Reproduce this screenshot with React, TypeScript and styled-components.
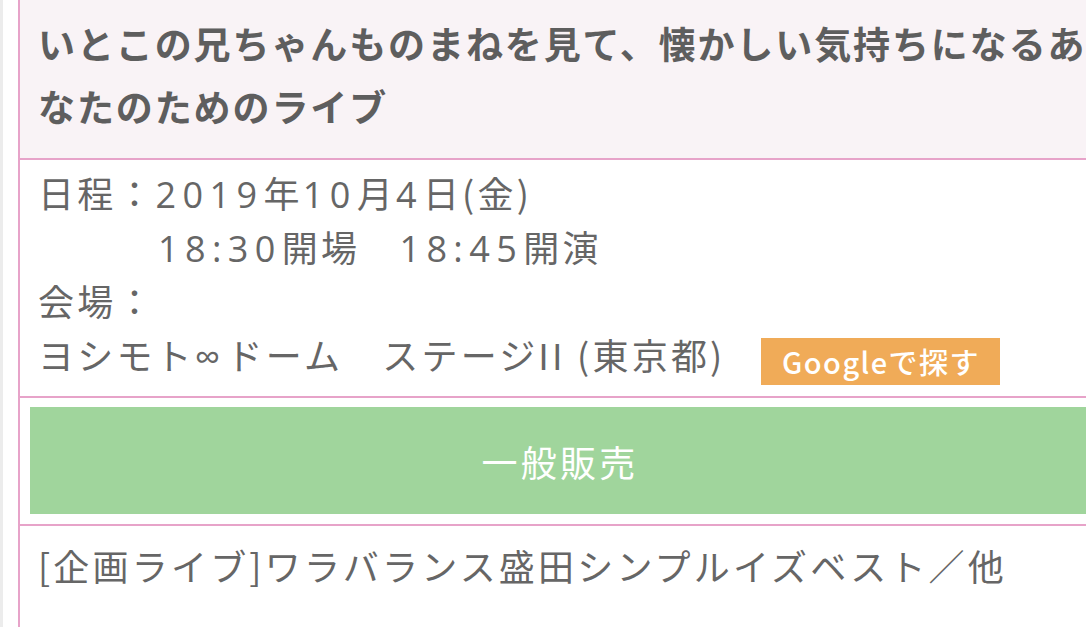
import React from "react";
import styled, { createGlobalStyle } from "styled-components";

const GlobalStyle = createGlobalStyle`
  html, body {
    margin: 0;
    padding: 0;
    background: #ffffff;
    overflow: hidden;
  }
  body {
    font-family: "Noto Sans CJK JP", "Noto Sans", sans-serif;
  }
`;

const PINK = "#e7a3c9";

const Page = styled.div`
  box-sizing: border-box;
  width: 1086px;
  height: 627px;
  overflow: hidden;
  background: #ffffff;
  border-left: 3px solid #ececec;
  padding-left: 15px;
`;

const Card = styled.section`
  width: 1080px;
  min-height: 627px;
  border-left: 2px solid ${PINK};
  border-right: 2px solid ${PINK};
  color: #666666;
  font-family: "Noto Sans CJK JP", sans-serif;
`;

const Title = styled.h2`
  margin: 0;
  padding: 12px 2px 20px 18px;
  background: #f9f3f6;
  border-bottom: 2px solid ${PINK};
  font-size: 37px;
  font-weight: 700;
  letter-spacing: 1.9px;
  line-height: 63px;
  color: #5e5e5e;
`;

const Info = styled.div`
  padding: 5px 10px 15px 18px;
  border-bottom: 2px solid ${PINK};
  font-size: 36px;
  font-weight: 400;
  letter-spacing: 3.2px;
  line-height: 54px;
`;

const InfoLine = styled.div<{ $indent?: number }>`
  display: flex;
  align-items: stretch;
  height: 54px;
  padding-left: ${(p) => p.$indent ?? 0}px;
  white-space: nowrap;
`;

const Num = styled.span`
  font-family: "Open Sans", "Noto Sans CJK JP", sans-serif;
  letter-spacing: 6.4px;
`;

const MapButton = styled.span`
  align-self: flex-end;
  margin: 0 0 -4px 36px;
  display: inline-flex;
  align-items: center;
  justify-content: center;
  height: 47px;
  width: 239px;
  background: #f0ab58;
  color: #ffffff;
  font-size: 29px;
  font-weight: 500;
  letter-spacing: 0.05em;
  line-height: 1;
`;

const Sale = styled.div`
  padding: 9px 10px 10px 10px;
  border-bottom: 2px solid ${PINK};
`;

const SaleBar = styled.div`
  display: flex;
  align-items: center;
  justify-content: center;
  height: 107px;
  background: #a0d59c;
  color: #ffffff;
  font-size: 36px;
  letter-spacing: 3.2px;
`;

const Lineup = styled.div`
  padding: 12px 10px 20px 18px;
  font-size: 36px;
  letter-spacing: 3.2px;
  line-height: 54px;
  white-space: nowrap;
`;

export default function App() {
  return (
    <>
      <GlobalStyle />
      <Page>
        <Card>
          <Title>いとこの兄ちゃんものまねを見て、懐かしい気持ちになるあなたのためのライブ</Title>
          <Info>
            <InfoLine>
              <span>
                日程：<Num>2019</Num>年<Num>10</Num>月<Num>4</Num>日(金)
              </span>
            </InfoLine>
            <InfoLine $indent={120}>
              <span>
                <Num>18:30</Num>開場　<Num>18:45</Num>開演
              </span>
            </InfoLine>
            <InfoLine>会場：</InfoLine>
            <InfoLine>
              <span>
                ヨシモト<Num>∞</Num>ドーム　ステージII (東京都)
              </span>
              <MapButton>Googleで探す</MapButton>
            </InfoLine>
          </Info>
          <Sale>
            <SaleBar>一般販売</SaleBar>
          </Sale>
          <Lineup>[企画ライブ]ワラバランス盛田シンプルイズベスト／他</Lineup>
        </Card>
      </Page>
    </>
  );
}
